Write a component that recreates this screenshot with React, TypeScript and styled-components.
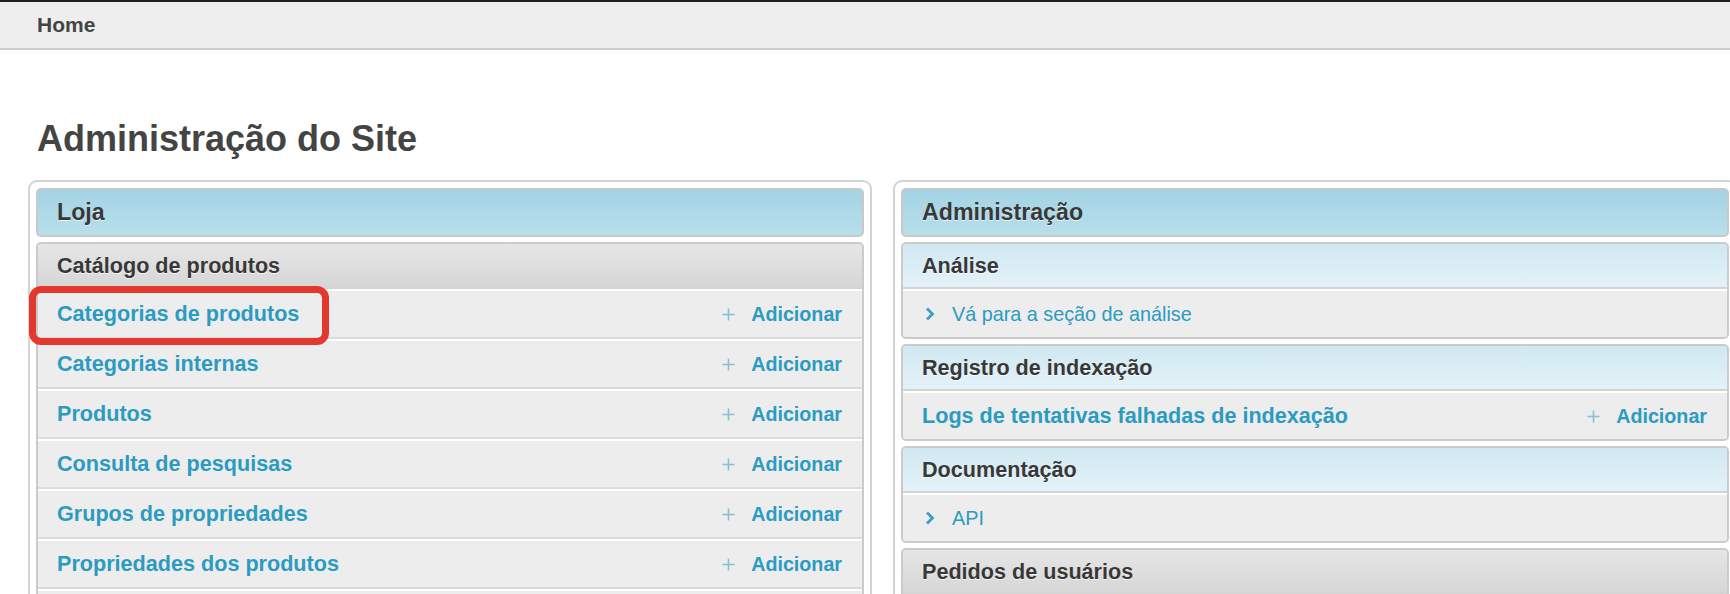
import styled, { createGlobalStyle, css } from "styled-components";

const GlobalStyle = createGlobalStyle`
  html, body {
    margin: 0;
    padding: 0;
    background: #fff;
    overflow: hidden;
  }
  body {
    font-family: "Liberation Sans", Arial, Helvetica, sans-serif;
  }
`;

const LINK = "#2b9bc1";

const TopBar = styled.div`
  display: flex;
  align-items: center;
  height: 46px;
  padding-left: 37px;
  background: #eeeeee;
  border-top: 2px solid #1f1f1f;
  border-bottom: 2px solid #cdcdcd;
  font-size: 21px;
  font-weight: 700;
  color: #444;
`;

const Content = styled.div`
  padding-left: 28px;
`;

const Title = styled.h1`
  margin: 69px 0 21px 9px;
  font-size: 36px;
  line-height: 40px;
  font-weight: 700;
  color: #444;
  white-space: nowrap;
`;

const Columns = styled.div`
  display: flex;
  gap: 21px;
  align-items: flex-start;
`;

const Panel = styled.div`
  flex: 0 0 844px;
  box-sizing: border-box;
  display: flex;
  flex-direction: column;
  gap: 5px;
  padding: 6px;
  border: 2px solid #d4d4d4;
  border-radius: 9px;
`;

const headerText = css`
  font-weight: 700;
  color: #383838;
  text-shadow: 0 1px 0 rgba(255, 255, 255, 0.75);
  white-space: nowrap;
`;

const Caption = styled.div`
  ${headerText};
  display: flex;
  align-items: center;
  height: 45px;
  padding: 0 19px;
  font-size: 23.2px;
  border: 2px solid #c9c9c9;
  border-radius: 5px;
  background: linear-gradient(#a2d3e4, #b9dfec);
`;

const Module = styled.div`
  border: 2px solid #cbcbcb;
  border-radius: 5px;
  background: #ededed;
`;

const ModuleHeader = styled.div<{ $tone: "blue" | "grey" }>`
  ${headerText};
  display: flex;
  align-items: center;
  height: 43px;
  padding: 0 19px;
  font-size: 21.6px;
  border-bottom: 2px solid #d3d3d3;
  border-radius: 3px 3px 0 0;
  background: ${(p) =>
    p.$tone === "blue"
      ? "linear-gradient(#d0e8f2, #e4f2f8)"
      : "linear-gradient(#e6e6e6, #d6d6d6)"};
`;

const Row = styled.div`
  position: relative;
  display: flex;
  align-items: center;
  justify-content: space-between;
  height: 46px;
  padding: 0 20px 0 19px;
  background: #ededed;
  border-top: 2px solid #fff;
  border-bottom: 2px solid #dbdbdb;

  &:last-child {
    border-bottom: none;
    border-radius: 0 0 3px 3px;
  }
`;

const RowLink = styled.span`
  font-size: 21.6px;
  font-weight: 700;
  color: ${LINK};
  white-space: nowrap;
`;

const AddLink = styled.span`
  display: flex;
  align-items: center;
  gap: 16px;
  font-size: 19.7px;
  font-weight: 700;
  color: ${LINK};
`;

const NavLink = styled.span`
  display: flex;
  align-items: center;
  gap: 17px;
  padding-left: 3px;
  font-size: 19.8px;
  color: ${LINK};
`;

const Highlight = styled.span`
  position: absolute;
  left: -9px;
  top: -5px;
  width: 300px;
  height: 59px;
  box-sizing: border-box;
  border: 7px solid #e3382d;
  border-radius: 12px;
  pointer-events: none;
  z-index: 2;
`;

const PlusIcon = () => (
  <svg width="13" height="13" viewBox="0 0 13 13">
    <path d="M6.5 0.5v12M0.5 6.5h12" stroke="#86c0d4" strokeWidth="1.6" />
  </svg>
);

const Chevron = () => (
  <svg width="10" height="14" viewBox="0 0 10 14">
    <path
      d="M2 1.5l5.5 5.5L2 12.5"
      fill="none"
      stroke="#3b9fc4"
      strokeWidth="2.8"
    />
  </svg>
);

const Add = () => (
  <AddLink>
    <PlusIcon />
    Adicionar
  </AddLink>
);

const catalog = [
  "Categorias de produtos",
  "Categorias internas",
  "Produtos",
  "Consulta de pesquisas",
  "Grupos de propriedades",
  "Propriedades dos produtos",
  "Opções de produtos",
];

export default function App() {
  return (
    <>
      <GlobalStyle />
      <TopBar>Home</TopBar>
      <Content>
        <Title>Administração do Site</Title>
        <Columns>
          <Panel>
            <Caption>Loja</Caption>
            <Module>
              <ModuleHeader $tone="grey">Catálogo de produtos</ModuleHeader>
              {catalog.map((name, i) => (
                <Row key={name}>
                  {i === 0 && <Highlight />}
                  <RowLink>{name}</RowLink>
                  <Add />
                </Row>
              ))}
            </Module>
          </Panel>
          <Panel>
            <Caption>Administração</Caption>
            <Module>
              <ModuleHeader $tone="blue">Análise</ModuleHeader>
              <Row>
                <NavLink>
                  <Chevron />
                  Vá para a seção de análise
                </NavLink>
              </Row>
            </Module>
            <Module>
              <ModuleHeader $tone="blue">Registro de indexação</ModuleHeader>
              <Row>
                <RowLink>Logs de tentativas falhadas de indexação</RowLink>
                <Add />
              </Row>
            </Module>
            <Module>
              <ModuleHeader $tone="blue">Documentação</ModuleHeader>
              <Row>
                <NavLink>
                  <Chevron />
                  API
                </NavLink>
              </Row>
            </Module>
            <Module>
              <ModuleHeader $tone="grey">Pedidos de usuários</ModuleHeader>
              <Row>
                <RowLink>Pedidos</RowLink>
                <Add />
              </Row>
            </Module>
          </Panel>
        </Columns>
      </Content>
    </>
  );
}
